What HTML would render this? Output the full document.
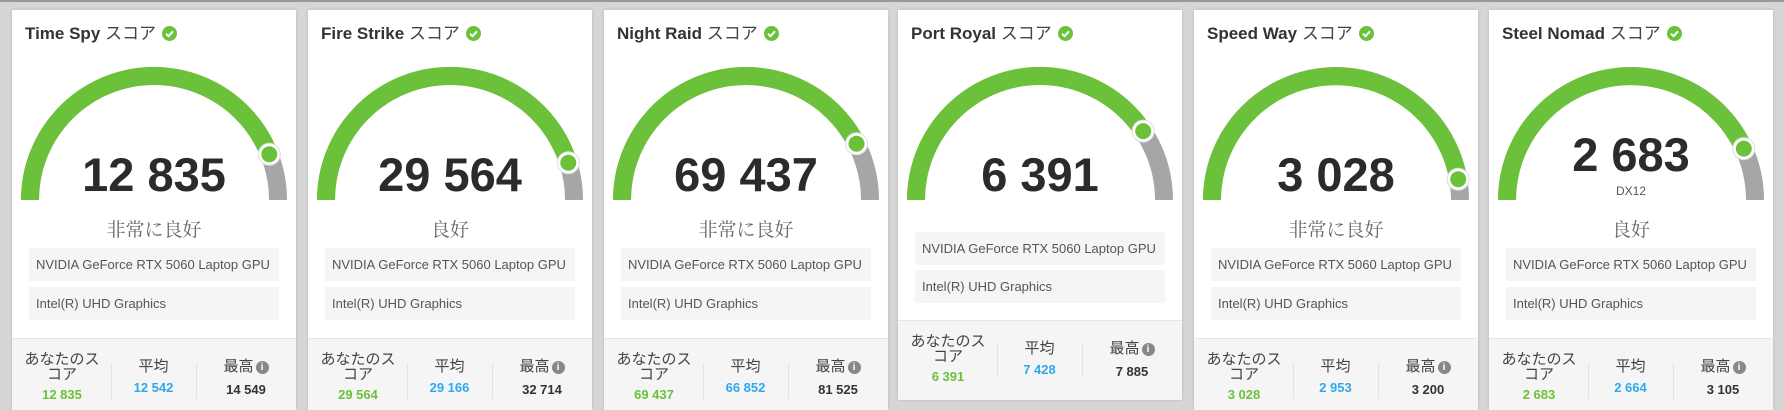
<!DOCTYPE html>
<html><head><meta charset="utf-8"><style>
*{margin:0;padding:0;box-sizing:border-box}
body{width:1784px;height:402px;overflow:hidden;background:#d6d6d6;font-family:"Liberation Sans","Noto Sans CJK JP",sans-serif;position:relative}
.bgline{position:absolute;left:0;top:0;width:1784px;height:2px;background:#9a9a9a}
.card{position:absolute;top:10px;width:284px;height:400px;background:#fff;box-shadow:0 0 3px rgba(0,0,0,.15);overflow:hidden}
.title{position:absolute;left:13px;top:9px;font-size:17px;color:#333;white-space:nowrap}
.title b{font-weight:bold}
.title span{font-weight:normal;color:#444}
.chk{display:inline-block;vertical-align:-2px;margin-left:6px}
svg.g{position:absolute;left:0;top:0}
.score{position:absolute;left:0;width:284px;text-align:center;font-size:47px;font-weight:bold;color:#2b2b2b;line-height:1}
.dx{position:absolute;left:0;width:284px;text-align:center;font-size:12px;color:#555}
.rate{position:absolute;left:0;width:284px;text-align:center;font-size:19px;color:#666;font-family:"Noto Serif CJK SC","Noto Sans CJK JP",serif}
.box{position:absolute;left:17px;width:250px;height:33px;background:#f5f5f5;font-size:13px;color:#555;padding-left:7px;line-height:33px}
.foot{position:absolute;left:0;width:284px;height:80px;background:#f5f5f5;border-top:1px solid #e6e6e6}
.col{position:absolute;top:0;text-align:center}
.sep{position:absolute;width:1px;background:#e2e2e2}
.lab{font-size:15px;color:#444;line-height:15px}
.val{font-size:13px;font-weight:bold}
.gr{color:#6cc13a}.bl{color:#31a8ea}.dk{color:#333}
.info{display:inline-block;width:13px;height:13px;border-radius:50%;background:#888;color:#fff;font-size:10px;line-height:13px;text-align:center;font-weight:bold;vertical-align:1px;margin-left:2px}
</style></head><body>
<div class="bgline"></div>

<!-- card template repeated -->
<div class="card" style="left:12px">
<div class="title"><b>Time Spy</b> <span>スコア</span><svg class="chk" width="15" height="15"><circle cx="7.5" cy="7.5" r="7.5" fill="#6cc13a"/><path d="M4 7.8l2.5 2.4L11 5.3" stroke="#fff" stroke-width="2" fill="none"/></svg></div>
<svg class="g" width="284" height="200"><path d="M9 190A133 133 0 0 1 275 190" stroke="none" fill="none"/><path d="M18 190A124 124 0 0 1 266 190" stroke="#a6a6a6" stroke-width="18" fill="none"/><path d="M18 190A124 124 0 0 1 257.3 144.3" stroke="#6cc13a" stroke-width="18" fill="none"/><circle cx="257.3" cy="144.3" r="11" fill="#fff" stroke="#ddd" stroke-width="1"/><circle cx="257.3" cy="144.3" r="8" fill="#6cc13a"/></svg>
<div class="score" style="top:141px">12 835</div>
<div class="rate" style="top:205px">非常に良好</div>
<div class="box" style="top:238px">NVIDIA GeForce RTX 5060 Laptop GPU</div>
<div class="box" style="top:277px">Intel(R) UHD Graphics</div>
<div class="foot" style="top:328px">
<div class="col" style="left:4px;width:92px;top:13px"><div class="lab">あなたのス<br>コア</div><div class="val gr" style="margin-top:5px">12 835</div></div>
<div class="sep" style="left:99px;top:24px;height:36px"></div>
<div class="col" style="left:99px;width:85px;top:20px"><div class="lab">平均</div><div class="val bl" style="margin-top:6px">12 542</div></div>
<div class="sep" style="left:184px;top:24px;height:36px"></div>
<div class="col" style="left:184px;width:100px;top:20px"><div class="lab">最高<span class="info">i</span></div><div class="val dk" style="margin-top:8px">14 549</div></div>
</div></div>

<div class="card" style="left:308px">
<div class="title"><b>Fire Strike</b> <span>スコア</span><svg class="chk" width="15" height="15"><circle cx="7.5" cy="7.5" r="7.5" fill="#6cc13a"/><path d="M4 7.8l2.5 2.4L11 5.3" stroke="#fff" stroke-width="2" fill="none"/></svg></div>
<svg class="g" width="284" height="200"><path d="M18 190A124 124 0 0 1 266 190" stroke="#a6a6a6" stroke-width="18" fill="none"/><path d="M18 190A124 124 0 0 1 260.3 152.7" stroke="#6cc13a" stroke-width="18" fill="none"/><circle cx="260.3" cy="152.7" r="11" fill="#fff" stroke="#ddd"/><circle cx="260.3" cy="152.7" r="8" fill="#6cc13a"/></svg>
<div class="score" style="top:141px">29 564</div>
<div class="rate" style="top:205px">良好</div>
<div class="box" style="top:238px">NVIDIA GeForce RTX 5060 Laptop GPU</div>
<div class="box" style="top:277px">Intel(R) UHD Graphics</div>
<div class="foot" style="top:328px">
<div class="col" style="left:4px;width:92px;top:13px"><div class="lab">あなたのス<br>コア</div><div class="val gr" style="margin-top:5px">29 564</div></div>
<div class="sep" style="left:99px;top:24px;height:36px"></div>
<div class="col" style="left:99px;width:85px;top:20px"><div class="lab">平均</div><div class="val bl" style="margin-top:6px">29 166</div></div>
<div class="sep" style="left:184px;top:24px;height:36px"></div>
<div class="col" style="left:184px;width:100px;top:20px"><div class="lab">最高<span class="info">i</span></div><div class="val dk" style="margin-top:8px">32 714</div></div>
</div></div>

<div class="card" style="left:604px">
<div class="title"><b>Night Raid</b> <span>スコア</span><svg class="chk" width="15" height="15"><circle cx="7.5" cy="7.5" r="7.5" fill="#6cc13a"/><path d="M4 7.8l2.5 2.4L11 5.3" stroke="#fff" stroke-width="2" fill="none"/></svg></div>
<svg class="g" width="284" height="200"><path d="M18 190A124 124 0 0 1 266 190" stroke="#a6a6a6" stroke-width="18" fill="none"/><path d="M18 190A124 124 0 0 1 252.5 133.7" stroke="#6cc13a" stroke-width="18" fill="none"/><circle cx="252.5" cy="133.7" r="11" fill="#fff" stroke="#ddd"/><circle cx="252.5" cy="133.7" r="8" fill="#6cc13a"/></svg>
<div class="score" style="top:141px">69 437</div>
<div class="rate" style="top:205px">非常に良好</div>
<div class="box" style="top:238px">NVIDIA GeForce RTX 5060 Laptop GPU</div>
<div class="box" style="top:277px">Intel(R) UHD Graphics</div>
<div class="foot" style="top:328px">
<div class="col" style="left:4px;width:92px;top:13px"><div class="lab">あなたのス<br>コア</div><div class="val gr" style="margin-top:5px">69 437</div></div>
<div class="sep" style="left:99px;top:24px;height:36px"></div>
<div class="col" style="left:99px;width:85px;top:20px"><div class="lab">平均</div><div class="val bl" style="margin-top:6px">66 852</div></div>
<div class="sep" style="left:184px;top:24px;height:36px"></div>
<div class="col" style="left:184px;width:100px;top:20px"><div class="lab">最高<span class="info">i</span></div><div class="val dk" style="margin-top:8px">81 525</div></div>
</div></div>

<div class="card" style="left:898px;height:390px">
<div class="title"><b>Port Royal</b> <span>スコア</span><svg class="chk" width="15" height="15"><circle cx="7.5" cy="7.5" r="7.5" fill="#6cc13a"/><path d="M4 7.8l2.5 2.4L11 5.3" stroke="#fff" stroke-width="2" fill="none"/></svg></div>
<svg class="g" width="284" height="200"><path d="M18 190A124 124 0 0 1 266 190" stroke="#a6a6a6" stroke-width="18" fill="none"/><path d="M18 190A124 124 0 0 1 245.2 121.1" stroke="#6cc13a" stroke-width="18" fill="none"/><circle cx="245.2" cy="121.1" r="11" fill="#fff" stroke="#ddd"/><circle cx="245.2" cy="121.1" r="8" fill="#6cc13a"/></svg>
<div class="score" style="top:141px">6 391</div>
<div class="box" style="top:222px">NVIDIA GeForce RTX 5060 Laptop GPU</div>
<div class="box" style="top:260px">Intel(R) UHD Graphics</div>
<div class="foot" style="top:310px;height:80px">
<div class="col" style="left:4px;width:92px;top:13px"><div class="lab">あなたのス<br>コア</div><div class="val gr" style="margin-top:5px">6 391</div></div>
<div class="sep" style="left:99px;top:21px;height:36px"></div>
<div class="col" style="left:99px;width:85px;top:20px"><div class="lab">平均</div><div class="val bl" style="margin-top:6px">7 428</div></div>
<div class="sep" style="left:184px;top:21px;height:36px"></div>
<div class="col" style="left:184px;width:100px;top:20px"><div class="lab">最高<span class="info">i</span></div><div class="val dk" style="margin-top:8px">7 885</div></div>
</div></div>

<div class="card" style="left:1194px">
<div class="title"><b>Speed Way</b> <span>スコア</span><svg class="chk" width="15" height="15"><circle cx="7.5" cy="7.5" r="7.5" fill="#6cc13a"/><path d="M4 7.8l2.5 2.4L11 5.3" stroke="#fff" stroke-width="2" fill="none"/></svg></div>
<svg class="g" width="284" height="200"><path d="M18 190A124 124 0 0 1 266 190" stroke="#a6a6a6" stroke-width="18" fill="none"/><path d="M18 190A124 124 0 0 1 264.2 169.2" stroke="#6cc13a" stroke-width="18" fill="none"/><circle cx="264.2" cy="169.2" r="11" fill="#fff" stroke="#ddd"/><circle cx="264.2" cy="169.2" r="8" fill="#6cc13a"/></svg>
<div class="score" style="top:141px">3 028</div>
<div class="rate" style="top:205px">非常に良好</div>
<div class="box" style="top:238px">NVIDIA GeForce RTX 5060 Laptop GPU</div>
<div class="box" style="top:277px">Intel(R) UHD Graphics</div>
<div class="foot" style="top:328px">
<div class="col" style="left:4px;width:92px;top:13px"><div class="lab">あなたのス<br>コア</div><div class="val gr" style="margin-top:5px">3 028</div></div>
<div class="sep" style="left:99px;top:24px;height:36px"></div>
<div class="col" style="left:99px;width:85px;top:20px"><div class="lab">平均</div><div class="val bl" style="margin-top:6px">2 953</div></div>
<div class="sep" style="left:184px;top:24px;height:36px"></div>
<div class="col" style="left:184px;width:100px;top:20px"><div class="lab">最高<span class="info">i</span></div><div class="val dk" style="margin-top:8px">3 200</div></div>
</div></div>

<div class="card" style="left:1489px">
<div class="title"><b>Steel Nomad</b> <span>スコア</span><svg class="chk" width="15" height="15"><circle cx="7.5" cy="7.5" r="7.5" fill="#6cc13a"/><path d="M4 7.8l2.5 2.4L11 5.3" stroke="#fff" stroke-width="2" fill="none"/></svg></div>
<svg class="g" width="284" height="200"><path d="M18 190A124 124 0 0 1 266 190" stroke="#a6a6a6" stroke-width="18" fill="none"/><path d="M18 190A124 124 0 0 1 254.8 138.6" stroke="#6cc13a" stroke-width="18" fill="none"/><circle cx="254.8" cy="138.6" r="11" fill="#fff" stroke="#ddd"/><circle cx="254.8" cy="138.6" r="8" fill="#6cc13a"/></svg>
<div class="score" style="top:121px">2 683</div>
<div class="dx" style="top:174px">DX12</div>
<div class="rate" style="top:205px">良好</div>
<div class="box" style="top:238px">NVIDIA GeForce RTX 5060 Laptop GPU</div>
<div class="box" style="top:277px">Intel(R) UHD Graphics</div>
<div class="foot" style="top:328px">
<div class="col" style="left:4px;width:92px;top:13px"><div class="lab">あなたのス<br>コア</div><div class="val gr" style="margin-top:5px">2 683</div></div>
<div class="sep" style="left:99px;top:24px;height:36px"></div>
<div class="col" style="left:99px;width:85px;top:20px"><div class="lab">平均</div><div class="val bl" style="margin-top:6px">2 664</div></div>
<div class="sep" style="left:184px;top:24px;height:36px"></div>
<div class="col" style="left:184px;width:100px;top:20px"><div class="lab">最高<span class="info">i</span></div><div class="val dk" style="margin-top:8px">3 105</div></div>
</div></div>
</body></html>
